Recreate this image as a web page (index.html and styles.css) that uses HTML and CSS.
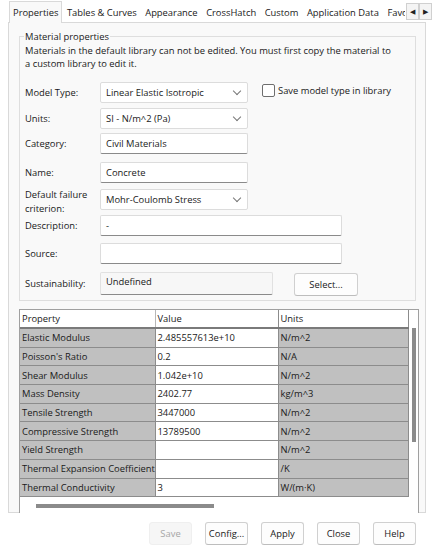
FILE: index.html
```html
<!DOCTYPE html>
<html lang="en">
<head>
    <meta charset="UTF-8">
    <title>Material</title>
    <link rel="stylesheet" href="styles.css">
</head>
<body>
    <div class="tabs">
        <div class="tab active">Properties</div>
        <div class="tab">Tables &amp; Curves</div>
        <div class="tab">Appearance</div>
        <div class="tab">CrossHatch</div>
        <div class="tab">Custom</div>
        <div class="tab">Application Data</div>
        <div class="tab cut">Favo</div>
        <div class="tab-arrows">
            <span class="arrow">&#9664;</span><span class="arrow">&#9654;</span>
        </div>
    </div>

    <div class="panel">
        <fieldset class="group">
            <legend>Material properties</legend>
            <p class="note">Materials in the default library can not be edited. You must first copy the material to<br>a custom library to edit it.</p>

            <div class="row r-model">
                <label>Model Type:</label>
                <div class="field select">Linear Elastic Isotropic<span class="chev"></span></div>
                <div class="check"><span class="box"></span>Save model type in library</div>
            </div>
            <div class="row r-units">
                <label>Units:</label>
                <div class="field select">SI - N/m^2 (Pa)<span class="chev"></span></div>
            </div>
            <div class="row r-cat">
                <label>Category:</label>
                <div class="field">Civil Materials</div>
            </div>
            <div class="row r-name">
                <label>Name:</label>
                <div class="field">Concrete</div>
            </div>
            <div class="row r-fail">
                <label>Default failure criterion:</label>
                <div class="field select">Mohr-Coulomb Stress<span class="chev"></span></div>
            </div>
            <div class="row r-desc">
                <label>Description:</label>
                <div class="field wide">-</div>
            </div>
            <div class="row r-src">
                <label>Source:</label>
                <div class="field wide"></div>
            </div>
            <div class="row r-sus">
                <label>Sustainability:</label>
                <div class="field flat">Undefined</div>
                <button class="btn select-btn">Select...</button>
            </div>
        </fieldset>

        <div class="grid-box">
            <div class="grid-main">
                <table class="props">
                    <colgroup><col class="c1"><col class="c2"><col class="c3"></colgroup>
                    <tr class="head"><th>Property</th><th>Value</th><th>Units</th></tr>
                    <tr><td>Elastic Modulus</td><td>2.485557613e+10</td><td>N/m^2</td></tr>
                    <tr><td>Poisson's Ratio</td><td>0.2</td><td>N/A</td></tr>
                    <tr><td>Shear Modulus</td><td>1.042e+10</td><td>N/m^2</td></tr>
                    <tr><td>Mass Density</td><td>2402.77</td><td>kg/m^3</td></tr>
                    <tr><td>Tensile Strength</td><td>3447000</td><td>N/m^2</td></tr>
                    <tr><td>Compressive Strength</td><td>13789500</td><td>N/m^2</td></tr>
                    <tr><td>Yield Strength</td><td></td><td>N/m^2</td></tr>
                    <tr><td>Thermal Expansion Coefficient</td><td></td><td>/K</td></tr>
                    <tr><td>Thermal Conductivity</td><td>3</td><td>W/(m·K)</td></tr>
                </table>
                <div class="vscroll"><div class="vthumb"></div></div>
            </div>
            <div class="hscroll"><div class="hthumb"></div></div>
        </div>
    </div>

    <div class="footer">
        <button class="btn" disabled>Save</button>
        <button class="btn">Config...</button>
        <button class="btn">Apply</button>
        <button class="btn">Close</button>
        <button class="btn">Help</button>
    </div>
</body>
</html>
```

FILE: styles.css
```css
body {
    margin: 0;
    width: 436px;
    height: 550px;
    background: #ffffff;
    font-family: "Open Sans", "Noto Sans", sans-serif;
    font-size: 9.4px;
    color: #1a1a1a;
    overflow: hidden;
}
.tabs {
    display: flex;
    align-items: flex-end;
    height: 22px;
    padding-left: 9px;
}
.tab {
    padding: 0 4px;
    height: 19px;
    line-height: 19px;
    margin-right: 0.5px;
    white-space: nowrap;
}
.tab.active {
    background: #f9f9f9;
    border: 1px solid #d9d9d9;
    border-bottom: none;
    height: 21px;
    line-height: 22px;
    padding: 0 3px;
    position: relative;
    z-index: 1;
    margin-bottom: -1px;
}
.tab.cut {
    width: 18px;
    padding-right: 0;
    overflow: hidden;
}
.tab-arrows {
    display: flex;
    margin-bottom: 2px;
}
.arrow {
    width: 11px;
    height: 15px;
    border: 1px solid #d0d0d0;
    background: #f4f4f4;
    font-size: 7px;
    line-height: 15px;
    text-align: center;
    color: #222;
}
.panel {
    margin: 0 10px 0 8px;
    height: 491px;
    background: #f9f9f9;
    border: 1px solid #d9d9d9;
    padding: 7px 9px 0 10px;
    box-sizing: border-box;
}
.group {
    margin: 0;
    padding: 0 6px 0 5px;
    height: 271px;
    border: 1px solid #dedede;
    box-sizing: border-box;
}
.group legend {
    padding: 0 1px;
    margin-left: -1px;
}
.note {
    margin: 1px 0 12px;
    line-height: 13px;
}
.row {
    display: flex;
    align-items: center;
    height: 21px;
    margin-bottom: 5px;
}
.row label {
    width: 75px;
    line-height: 14px;
}
.r-units { margin-bottom: 4px; }
.r-cat { margin-bottom: 8px; }
.r-name { margin-bottom: 5px; }
.r-fail { margin-bottom: 5px; height: 22px; }
.r-fail label { margin-top: 6px; }
.r-desc { margin-bottom: 7px; }
.r-src { margin-bottom: 8px; }
.r-sus { height: 23px; }
.field {
    width: 148px;
    height: 21px;
    box-sizing: border-box;
    background: #ffffff;
    border: 1px solid #dcdcdc;
    border-bottom: 1px solid #8a8a8a;
    border-radius: 2px;
    padding: 0 5px;
    line-height: 19px;
    position: relative;
}
.field.select {
    border-bottom-color: #dcdcdc;
}
.chev {
    position: absolute;
    right: 7px;
    top: 5px;
    width: 5px;
    height: 5px;
    border-right: 1px solid #777;
    border-bottom: 1px solid #777;
    transform: rotate(45deg);
}
.field.wide {
    width: 242px;
}
.field.flat {
    width: 173px;
    height: 23px;
    background: #f7f7f7;
    border-color: #e1e1e1;
    border-bottom-color: #8a8a8a;
    line-height: 17px;
}
.check {
    display: flex;
    align-items: center;
    margin-left: 14px;
    margin-top: -4px;
}
.box {
    width: 11px;
    height: 11px;
    border: 1px solid #6e6e6e;
    border-radius: 2px;
    background: #fff;
    margin-right: 3px;
}
.btn {
    font-family: inherit;
    font-size: 9.4px;
    color: #1a1a1a;
    width: 44px;
    height: 23px;
    padding: 0;
    background: #fdfdfd;
    border: 1px solid #d0d0d0;
    border-bottom-color: #bdbdbd;
    border-radius: 3px;
}
.btn:disabled {
    color: #a6a6a6;
    background: #f6f6f6;
    border-color: #efefef;
}
.select-btn {
    width: 64px;
    margin: 2px 0 0 21px;
}
.grid-box {
    margin-top: 8px;
    width: 398px;
    border: 1px solid #a0a0a0;
    border-bottom: none;
    background: #ffffff;
}
.grid-main {
    display: flex;
}
.props {
    border-collapse: collapse;
    table-layout: fixed;
    width: 389px;
}
.c1 { width: 135px; }
.c2 { width: 123px; }
.props th, .props td {
    height: 17.7px;
    padding: 0 2px;
    text-align: left;
    font-weight: normal;
    white-space: nowrap;
    overflow: hidden;
    border-bottom: 1px solid #8c8c8c;
    border-right: 1px solid #8c8c8c;
    line-height: 17px;
}
.props th {
    border-bottom: 2px solid #7a7a7a;
    height: 16px;
}
.props th:first-child { border-right-color: #b8b8b8; }
.props td:first-child,
.props td:nth-child(3) {
    background: #c0c0c0;
}
.vscroll {
    width: 9px;
    position: relative;
}
.vthumb {
    position: absolute;
    left: 3px;
    top: 18px;
    width: 4px;
    height: 114px;
    background: #8b8b8b;
}
.hscroll {
    height: 16px;
    position: relative;
}
.hthumb {
    position: absolute;
    left: 16px;
    top: 7px;
    width: 178px;
    height: 4px;
    background: #8b8b8b;
}
.footer {
    display: flex;
    justify-content: flex-end;
    gap: 13px;
    padding: 9px 20px 0 0;
}
.footer .btn {
    width: 43px;
}
```
